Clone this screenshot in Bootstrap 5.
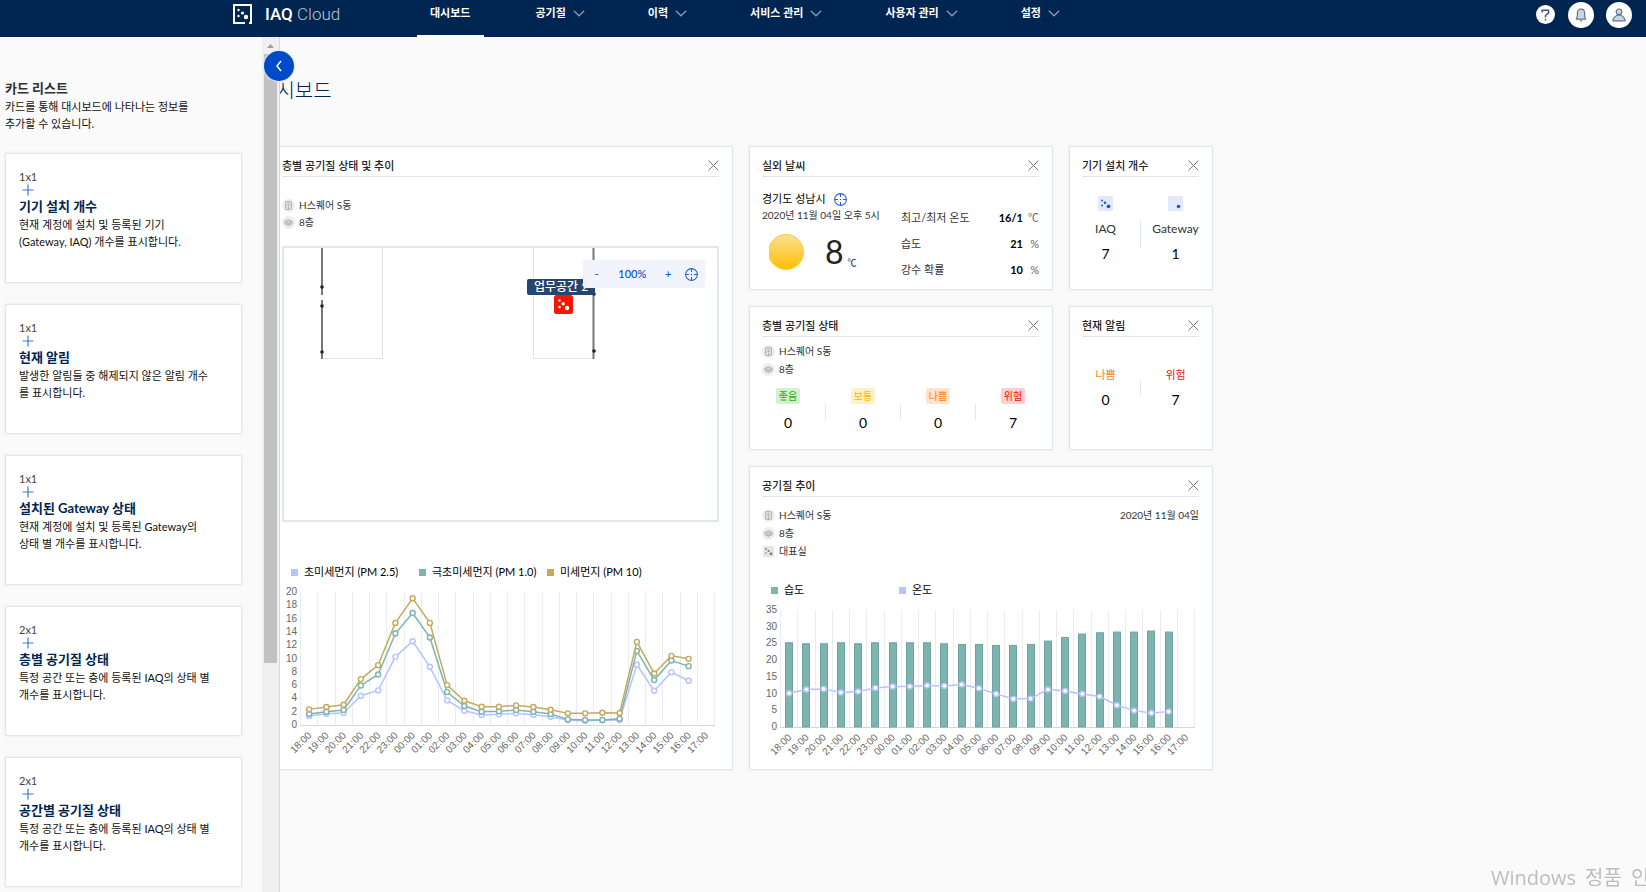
<!DOCTYPE html>
<html lang="ko">
<head>
<meta charset="utf-8">
<meta name="viewport" content="width=device-width, initial-scale=1">
<title>IAQ Cloud - 대시보드</title>
<link rel="stylesheet" href="https://cdn.jsdelivr.net/npm/bootstrap@5.3.0/dist/css/bootstrap.min.css">
<style>
  :root { --navy:#002550; --line:#e2e7ed; --blue:#0a50c8; --ink:#333; }
  body { background:#fafafa; color:#111; font-family:Lato,"Noto Sans CJK KR",sans-serif; font-size:11px; line-height:17px; min-height:100vh; }
  button { font:inherit; }
  .icon-btn { background:none; border:0; padding:0; line-height:0; }

  /* top bar */
  .topbar { background:var(--navy); height:37px; padding-right:14px; position:relative; z-index:3; }
  .brand { margin-left:233px; width:184px; gap:13px; height:27px; color:#fff; text-decoration:none; }
  .brand-name { font:500 17px/24px Roboto,sans-serif; }
  .brand-name span { font-weight:300; color:#b9c6d6; }
  .main-menu { gap:63px; padding-left:13px; }
  .main-menu a { color:#fff; font-weight:700; text-decoration:none; line-height:26px; gap:7px; position:relative; }
  .main-menu a.current { padding-right:2px; }
  .main-menu a.current::after { content:""; position:absolute; left:-13px; right:-12px; top:35px; height:4px; background:#fff; }
  .user-tools { gap:12px; height:29px; }
  .round-tool { background:#fff; border-radius:50%; width:26px; height:26px; display:flex; align-items:center; justify-content:center; }
  .round-tool.help { width:19px; height:19px; margin-right:1px; }

  /* card list panel */
  .panel { width:280px; height:calc(100vh - 37px); border-right:1px solid #d8d8d8; background:#fafafa; position:relative; z-index:2; }
  .panel-body { overflow:hidden; padding:42px 20px 0 5px; }
  .panel h2 { font-size:13px; line-height:18px; font-weight:700; color:var(--ink); margin:0 0 1px; }
  .panel-cards { gap:21px; margin-top:21px; }
  .tile { background:#fff; border:1px solid var(--line); box-shadow:0 0 3px #e6eaef; }
  .panel .tile { height:130px; padding:16px 13px 0; flex-shrink:0; }
  .tile-size { line-height:14px; color:#444; }
  .tile h3 { font-size:13px; line-height:18px; font-weight:700; color:var(--navy); margin:1px 0; }
  .add-btn { display:block; margin-left:3px; }
  .scroll-track { width:17px; background:#f0f0f0; flex-shrink:0; }
  .scroll-thumb { background:#c1c1c1; width:13px; height:609px; margin:6px 2px 0; }
  .scroll-track svg { display:block; margin:7px auto 0; }
  .collapse-btn { position:absolute; right:-15px; top:14px; width:30px; height:30px; border-radius:50%; background:#0049c8; border:0; padding:0; line-height:0; box-shadow:0 0 2px 1px #dfe6f3; }

  /* dashboard */
  .board { margin-left:-11px; padding-top:39px; flex:1 1 0; min-width:0; }
  .board h1 { font-size:20px; line-height:28px; font-weight:300; color:var(--navy); margin:0 0 42px -11px; }
  .units { display:grid; grid-template-columns:repeat(6,144px); grid-auto-rows:144px; gap:16px; }
  .units .tile { padding:0 13px 0 12px; }
  .w-large { grid-column:1 / span 3; grid-row:1 / span 4; }
  .w-two { grid-column:4 / span 2; }
  .w-wide { grid-column:4 / span 3; grid-row:3 / span 2; }
  .tile-head { height:30px; padding-top:7px; border-bottom:1px solid var(--line); }
  .tile-head h2 { font-size:11px; line-height:17px; font-weight:500; color:#222; margin:0; }
  .place { font-size:10px; line-height:18px; color:var(--ink); list-style:none; margin:0; padding:0; }
  .place li { display:flex; align-items:center; gap:4px; }
  .w-large .place { line-height:17px; margin:20px 0 15px; }
  .w-wide .place { margin-top:9px; }
  .w-two .place { margin-top:5px; }
  .place-date { font-size:10px; line-height:18px; margin-top:9px; color:var(--ink); }

  .floor { border:2px solid var(--line); height:276px; position:relative; overflow:hidden; }
  .floor-plan { position:absolute; left:0; top:0; }
  .room-name { position:absolute; left:243px; top:31px; height:16px; line-height:16px; padding:0 7px; background:#26466e; color:#fff; font-size:12px; font-weight:500; border-radius:2px; white-space:nowrap; width:68px; }
  .room-dot { position:absolute; left:270px; top:47px; }
  .zoomer { position:absolute; right:12px; top:12px; width:122px; height:28px; background:#f1f4fd; color:var(--blue); border-radius:2px; padding:0 7px 2px; }
  .zoomer button { color:var(--blue); width:13px; line-height:17px; }
  .zoomer .rate { width:54px; font-weight:500; }

  .legend-row { line-height:16px; padding-left:9px; margin-bottom:6px; color:#000; }
  .legend-row span { width:128px; white-space:nowrap; display:flex; align-items:center; gap:6px; flex-shrink:0; }
  .legend-row i { width:7px; height:7px; display:block; }
  .bg-lav { background:#b8c3fe; } .bg-teal { background:#7cb4b0; } .bg-gold { background:#c6a95f; }
  .w-large .legend-row { margin-top:42px; }
  .w-wide .legend-row { margin-top:22px; }
  .plot { display:block; width:100%; height:auto; }
  .plot text { font-family:"Liberation Sans",sans-serif; fill:#666; font-size:10px; }

  .weather-now { padding-top:14px; line-height:16px; width:139px; }
  .weather-now .when { font-size:10px; color:var(--ink); white-space:nowrap; }
  .weather-now .reading { padding:11px 0 0 7px; }
  .degrees { font-size:32px; line-height:36px; color:#222; }
  .degree-unit { font-size:9px; line-height:14px; }
  .weather-list { width:138px; margin-top:28px; }
  .weather-list td, .weather-list th { padding:0; line-height:26px; font-weight:400; color:var(--ink); }
  .weather-list td { text-align:right; }
  .weather-list td:nth-child(2) { font-weight:700; color:#000; }
  .weather-list td:last-child { width:16px; color:#666; }

  .tally { width:52px; text-align:center; display:flex; flex-direction:column; align-items:center; }
  .tally b { font-size:14px; line-height:20px; font-weight:400; color:#000; }
  .tally.narrow { width:47px; }
  .tally .kind { line-height:16px; margin-bottom:7px; }
  .tally .device { font-size:12px; margin-top:10px; color:var(--ink); }
  .rule { width:1px; background:var(--line); height:16px; }
  .devices .tally { padding-top:19px; }
  .devices .rule { height:29px; margin-top:43px; }
  .alerts .tally { padding-top:30px; }
  .alerts .rule { margin-top:43px; }
  .levels { margin-top:10px; }
  .level { width:24px; height:16px; font-size:10px; line-height:16px; border-radius:2px; margin-bottom:9px; white-space:nowrap; }
  .good { background:#d5f0cd; color:#2fae10; } .fair { background:#fff0c8; color:#ffb900; }
  .bad { background:#ffe3cb; color:#ff7a0a; } .danger { background:#ffcfcd; color:#ee1408; }
  .alerts .bad, .alerts .danger { background:none; }

  .os-note { position:fixed; right:0; bottom:0; width:155px; overflow:hidden; white-space:nowrap; gap:9px; color:#bdbdbd; font:400 20px/28px "Open Sans","Noto Sans CJK KR",sans-serif; pointer-events:none; }
</style>
</head>
<body class="overflow-hidden">

<svg class="d-none" aria-hidden="true">
  <symbol id="i-close" viewBox="0 0 11 11"><path d="M.5.5l10 10M10.5.5l-10 10" stroke="#777" fill="none"/></symbol>
  <symbol id="i-down" viewBox="0 0 12 7"><path d="M.8.8L6 5.8 11.2.8" stroke="#8c9db3" stroke-width="1.2" fill="none"/></symbol>
  <symbol id="i-plus" viewBox="0 0 12 12"><path d="M6 .5v11M.5 6h11" stroke="#3f78dc" stroke-width="1.2" fill="none"/></symbol>
  <symbol id="i-target" viewBox="0 0 13 13"><circle cx="6.500" cy="6.500" r="5.900" stroke="#2860cf" stroke-width="1.100" fill="none"/><path d="M6.500 .5v3.500M6.500 9v3.500M.5 6.500h3.500M9 6.500h3.500M6.500 5.800v1.400M5.800 6.500h1.400" stroke="#2860cf" fill="none"/></symbol>
  <symbol id="i-building" viewBox="0 0 13 13"><circle cx="6.500" cy="6.500" r="6.500" fill="#ededed"/><rect x="3.500" y="2.500" width="6" height="8" rx=".8" fill="#dedede" stroke="#b4b4b4"/><path d="M5.500 4.700h2M5.500 6.500h2M6.500 8v2" stroke="#aaa"/></symbol>
  <symbol id="i-floor" viewBox="0 0 13 13"><circle cx="6.500" cy="6.500" r="6.500" fill="#ededed"/><path d="M2.500 5.800l4-2 4 2-4 2zM2.500 7.500l4 2 4-2" fill="#d0d0d0" stroke="#b0b0b0"/></symbol>
  <symbol id="i-sensor" viewBox="0 0 13 13"><rect x="1" y="1" width="11" height="11" rx="1" fill="#e6e6e6"/><g fill="#777"><circle cx="4" cy="4" r=".9"/><circle cx="6.500" cy="6" r="1.100"/><circle cx="4" cy="8" r=".8"/><circle cx="9" cy="8.800" r="1.400"/></g></symbol>
</svg>

<header class="topbar d-flex align-items-start">
  <a href="#" class="brand d-flex align-items-center">
    <svg width="19" height="20" viewBox="0 0 19 20"><path d="M12 19H1V1h17v18h-2" fill="none" stroke="#fff" stroke-width="2"/><g fill="#fff"><circle cx="5.500" cy="6" r="1.200"/><circle cx="9.500" cy="9" r="1.600"/><circle cx="5.500" cy="12" r="1.200"/><circle cx="13" cy="13" r="2.200"/></g></svg>
    <span class="brand-name">IAQ <span>Cloud</span></span>
  </a>
  <nav class="main-menu d-flex flex-grow-1" aria-label="주 메뉴">
    <a href="#" class="current">대시보드</a>
    <a href="#" class="d-flex align-items-center">공기질<svg width="12" height="7"><use href="#i-down"/></svg></a>
    <a href="#" class="d-flex align-items-center">이력<svg width="12" height="7"><use href="#i-down"/></svg></a>
    <a href="#" class="d-flex align-items-center">서비스 관리<svg width="12" height="7"><use href="#i-down"/></svg></a>
    <a href="#" class="d-flex align-items-center">사용자 관리<svg width="12" height="7"><use href="#i-down"/></svg></a>
    <a href="#" class="d-flex align-items-center">설정<svg width="12" height="7"><use href="#i-down"/></svg></a>
  </nav>
  <div class="user-tools d-flex align-items-center">
    <button class="icon-btn round-tool help" aria-label="도움말"><svg width="9" height="12" viewBox="0 0 9 12"><path d="M1.200 3.500V1.200h6.300v3L4.500 6.500v2" fill="none" stroke="#3d567a" stroke-width="1.500"/><path d="M4.500 9.800v1.700" stroke="#3d567a" stroke-width="1.500"/></svg></button>
    <button class="icon-btn round-tool" aria-label="알림"><svg width="12" height="14" viewBox="0 0 12 14"><path d="M.8 11.200h10.400M1.800 11V9.500l.6-1V5C2.400 2.500 4 1.200 6 1.200S9.600 2.500 9.600 5v3.500l.6 1V11" fill="#ccd5e0" stroke="#5d7493" stroke-width="1.200"/><path d="M4.800 12.800h2.400" stroke="#5d7493" stroke-width="1.200"/></svg></button>
    <button class="icon-btn round-tool" aria-label="내 계정"><svg width="14" height="14" viewBox="0 0 14 14"><circle cx="7" cy="3.800" r="2.800" fill="#ccd5e0" stroke="#5d7493" stroke-width="1.200"/><path d="M1 12.800V11.500C2 9 4 7.800 5 7.200h4c1 .6 3 1.800 4 4.300v1.300z" fill="#ccd5e0" stroke="#5d7493" stroke-width="1.200"/></svg></button>
  </div>
</header>

<div class="d-flex">
  <aside class="panel d-flex">
    <div class="panel-body flex-grow-1">
      <h2>카드 리스트</h2>
      <div>카드를 통해 대시보드에 나타나는 정보를<br>추가할 수 있습니다.</div>
      <div class="panel-cards d-flex flex-column">
        <section class="tile"><div class="tile-size">1x1</div><button class="icon-btn add-btn" aria-label="추가"><svg width="12" height="12"><use href="#i-plus"/></svg></button><h3>기기 설치 개수</h3>현재 계정에 설치 및 등록된 기기<br>(Gateway, IAQ) 개수를 표시합니다.</section>
        <section class="tile"><div class="tile-size">1x1</div><button class="icon-btn add-btn" aria-label="추가"><svg width="12" height="12"><use href="#i-plus"/></svg></button><h3>현재 알림</h3>발생한 알림들 중 해제되지 않은 알림 개수<br>를 표시합니다.</section>
        <section class="tile"><div class="tile-size">1x1</div><button class="icon-btn add-btn" aria-label="추가"><svg width="12" height="12"><use href="#i-plus"/></svg></button><h3>설치된 Gateway 상태</h3>현재 계정에 설치 및 등록된 Gateway의<br>상태 별 개수를 표시합니다.</section>
        <section class="tile"><div class="tile-size">2x1</div><button class="icon-btn add-btn" aria-label="추가"><svg width="12" height="12"><use href="#i-plus"/></svg></button><h3>층별 공기질 상태</h3>특정 공간 또는 층에 등록된 IAQ의 상태 별<br>개수를 표시합니다.</section>
        <section class="tile"><div class="tile-size">2x1</div><button class="icon-btn add-btn" aria-label="추가"><svg width="12" height="12"><use href="#i-plus"/></svg></button><h3>공간별 공기질 상태</h3>특정 공간 또는 층에 등록된 IAQ의 상태 별<br>개수를 표시합니다.</section>
      </div>
    </div>
    <div class="scroll-track"><svg width="7" height="4" viewBox="0 0 7 4"><path d="M0 4L3.500 0 7 4z" fill="#a0a0a0"/></svg><div class="scroll-thumb"></div></div>
    <button class="collapse-btn" aria-label="접기"><svg width="8" height="14" viewBox="0 0 8 14"><path d="M6 2L2 7l4 5" fill="none" stroke="#fff" stroke-width="1.500"/></svg></button>
  </aside>

  <main class="board">
    <h1>대시보드</h1>
    <div class="units">

      <section class="tile w-large">
        <div class="tile-head d-flex justify-content-between align-items-center"><h2>층별 공기질 상태 및 추이</h2><button class="icon-btn" aria-label="닫기"><svg width="11" height="11"><use href="#i-close"/></svg></button></div>
        <ul class="place"><li><svg width="13" height="13"><use href="#i-building"/></svg>H스퀘어 S동</li><li><svg width="13" height="13"><use href="#i-floor"/></svg>8층</li></ul>
        <div class="floor">
          <svg class="floor-plan" width="433" height="272" viewBox="0 0 433 272">
            <path d="M38.500 110.500h60V0M249.500 0v110.500h60" fill="none" stroke="#e2e2e2"/>
            <path d="M38 0v47M38 52v59M309.500 0v111" stroke="#777" stroke-width="2"/>
            <g fill="#222"><circle cx="38" cy="39" r="1.800"/><circle cx="38" cy="58" r="1.800"/><circle cx="38" cy="104" r="1.800"/><circle cx="310" cy="46" r="1.800"/><circle cx="310" cy="103" r="1.800"/></g>
          </svg>
          <div class="room-name">업무공간 2</div>
          <svg class="room-dot" width="19" height="19" viewBox="0 0 19 19"><rect width="19" height="19" rx="2.500" fill="#f81500"/><g fill="#fff"><circle cx="5.500" cy="5.500" r="1.300"/><circle cx="9.200" cy="8.800" r="1.700"/><circle cx="5.500" cy="12" r="1.300"/><circle cx="13" cy="13" r="2.200"/></g></svg>
          <div class="zoomer d-flex align-items-center justify-content-between">
            <button class="icon-btn" aria-label="축소">-</button><span class="rate text-center">100%</span><button class="icon-btn" aria-label="확대">+</button><button class="icon-btn ms-2" aria-label="가운데 맞춤"><svg width="13" height="13"><use href="#i-target"/></svg></button>
          </div>
        </div>
        <div class="legend-row d-flex"><span><i class="bg-lav"></i>초미세먼지 (PM 2.5)</span><span><i class="bg-teal"></i>극초미세먼지 (PM 1.0)</span><span><i class="bg-gold"></i>미세먼지 (PM 10)</span></div>
        <svg class="plot" id="dust" viewBox="0 0 437 170"></svg>
      </section>

      <section class="tile w-two">
        <div class="tile-head d-flex justify-content-between align-items-center"><h2>실외 날씨</h2><button class="icon-btn" aria-label="닫기"><svg width="11" height="11"><use href="#i-close"/></svg></button></div>
        <div class="d-flex align-items-start">
          <div class="weather-now">
            <div class="d-flex align-items-center gap-2 text-black">경기도 성남시<svg width="13" height="13"><use href="#i-target"/></svg></div>
            <div class="when">2020년 11월 04일 오후 5시</div>
            <div class="reading d-flex align-items-end">
              <svg width="36" height="36" viewBox="0 0 36 36"><defs><linearGradient id="sun" x2="0" y2="1"><stop stop-color="#fbe093"/><stop offset="1" stop-color="#ffc000"/></linearGradient></defs><circle cx="17" cy="18" r="17.500" fill="url(#sun)" stroke="#fccb3b"/></svg>
              <span class="degrees ms-3 ps-1">8</span><span class="degree-unit ms-1">℃</span>
            </div>
          </div>
          <table class="weather-list">
            <tr><th scope="row">최고/최저 온도</th><td>16/1</td><td>℃</td></tr>
            <tr><th scope="row">습도</th><td>21</td><td>%</td></tr>
            <tr><th scope="row">강수 확률</th><td>10</td><td>%</td></tr>
          </table>
        </div>
      </section>

      <section class="tile">
        <div class="tile-head d-flex justify-content-between align-items-center"><h2>기기 설치 개수</h2><button class="icon-btn" aria-label="닫기"><svg width="11" height="11"><use href="#i-close"/></svg></button></div>
        <div class="devices d-flex justify-content-between">
          <div class="tally narrow"><svg width="15" height="15" viewBox="0 0 15 15"><rect width="15" height="15" rx="1" fill="#e2e9fa"/><g fill="#1f5ad0"><circle cx="4" cy="4.500" r="1"/><circle cx="7" cy="6.800" r="1.300"/><circle cx="4" cy="9.500" r="1"/><circle cx="10.500" cy="10.300" r="1.900"/></g></svg><span class="kind device">IAQ</span><b>7</b></div>
          <div class="rule"></div>
          <div class="tally narrow"><svg width="15" height="15" viewBox="0 0 15 15"><rect width="15" height="15" rx="1" fill="#e2e9fa"/><circle cx="10.500" cy="10.500" r="1.800" fill="#1f5ad0"/></svg><span class="kind device">Gateway</span><b>1</b></div>
        </div>
      </section>

      <section class="tile w-two">
        <div class="tile-head d-flex justify-content-between align-items-center"><h2>층별 공기질 상태</h2><button class="icon-btn" aria-label="닫기"><svg width="11" height="11"><use href="#i-close"/></svg></button></div>
        <ul class="place"><li><svg width="13" height="13"><use href="#i-building"/></svg>H스퀘어 S동</li><li><svg width="13" height="13"><use href="#i-floor"/></svg>8층</li></ul>
        <div class="levels d-flex justify-content-between">
          <div class="tally"><span class="level good">좋음</span><b>0</b></div><div class="rule mt-3"></div>
          <div class="tally"><span class="level fair">보통</span><b>0</b></div><div class="rule mt-3"></div>
          <div class="tally"><span class="level bad">나쁨</span><b>0</b></div><div class="rule mt-3"></div>
          <div class="tally"><span class="level danger">위험</span><b>7</b></div>
        </div>
      </section>

      <section class="tile alerts">
        <div class="tile-head d-flex justify-content-between align-items-center"><h2>현재 알림</h2><button class="icon-btn" aria-label="닫기"><svg width="11" height="11"><use href="#i-close"/></svg></button></div>
        <div class="d-flex justify-content-between">
          <div class="tally narrow"><span class="kind bad">나쁨</span><b>0</b></div>
          <div class="rule"></div>
          <div class="tally narrow"><span class="kind danger">위험</span><b>7</b></div>
        </div>
      </section>

      <section class="tile w-wide">
        <div class="tile-head d-flex justify-content-between align-items-center"><h2>공기질 추이</h2><button class="icon-btn" aria-label="닫기"><svg width="11" height="11"><use href="#i-close"/></svg></button></div>
        <div class="d-flex justify-content-between align-items-start">
          <ul class="place"><li><svg width="13" height="13"><use href="#i-building"/></svg>H스퀘어 S동</li><li><svg width="13" height="13"><use href="#i-floor"/></svg>8층</li><li><svg width="13" height="13"><use href="#i-sensor"/></svg>대표실</li></ul>
          <div class="place-date">2020년 11월 04일</div>
        </div>
        <div class="legend-row d-flex"><span><i class="bg-teal"></i>습도</span><span><i class="bg-lav"></i>온도</span></div>
        <svg class="plot" id="climate" viewBox="0 0 437 155"></svg>
      </section>
    </div>
  </main>
</div>

<div class="os-note d-flex"><span>Windows</span><span>정품</span><span>인</span></div>

<script src="https://cdn.jsdelivr.net/npm/bootstrap@5.3.0/dist/js/bootstrap.bundle.min.js"></script>
<script>
  const LEFT = 18.5, STEP = 17.25, TOP = 6;
  // Draws the hourly grid, optional bars and any number of lines into one svg
  function draw(id, bottom, max, tick, bars, lines) {
    const x = i => LEFT + STEP * (i + 0.5), y = v => bottom - v / max * (bottom - TOP);
    let s = '';
    for (let i = 0; i <= 24; i++) { const g = Math.floor(LEFT + STEP * i) + 0.5; s += `<path d="M${g} ${TOP}V${bottom}" stroke="#e9ecf0"/>`; }
    s += `<path d="M18 ${bottom + 0.5}H433" stroke="#d4d8dc"/>`;
    for (let v = 0; v <= max; v += tick) s += `<text x="15" y="${y(v) + 3}" text-anchor="end">${v}</text>`;
    for (let i = 0; i < 24; i++) s += `<text text-anchor="end" transform="translate(${x(i) + 3} ${bottom + 11}) rotate(-45)">${String((18 + i) % 24).padStart(2, '0')}:00</text>`;
    bars.forEach((v, i) => { const l = Math.round(x(i) - 4); s += `<rect x="${l}.5" y="${y(v)}" width="7" height="${bottom - y(v)}" fill="#7cb4b0" stroke="#6fa39f"/>`; });
    lines.forEach(([color, data]) => {
      s += `<polyline fill="none" stroke="${color}" stroke-width="1.5" points="${data.map((v, i) => x(i) + ',' + y(v)).join(' ')}"/>`;
      data.forEach((v, i) => s += `<circle cx="${x(i)}" cy="${y(v)}" r="2.5" fill="#fff" stroke="${color}" stroke-width="1.4"/>`);
    });
    document.getElementById(id).innerHTML = s;
  }
  draw('dust', 139, 20, 2, [], [
    ['#b8c3fe', [1.35,1.7,1.8,4.4,5.2,10.25,12.6,8.75,3.7,2.15,1.5,1.6,1.75,1.55,1.25,.7,.65,.7,.75,9.05,5.15,7.95,6.65]],
    ['#7cb4b0', [1.65,2,2.25,5.95,7.6,13.75,16.85,13.15,4.95,2.85,2,2.05,2.25,2,1.65,.85,.75,.75,.95,11.15,6.75,9.7,8.85]],
    ['#c6a95f', [2.35,2.7,3.05,6.9,9,15.35,19.05,15.35,6,3.65,2.75,2.75,2.95,2.7,2.3,1.75,1.75,1.85,1.8,12.5,7.75,10.4,9.95]]
  ]);
  draw('climate', 123, 35, 5,
    [25.2,24.9,24.9,25.2,24.9,25.2,25.2,25.2,25.2,24.9,24.7,24.7,24.4,24.4,24.7,25.7,26.8,27.8,28.2,28.4,28.4,28.7,28.4],
    [['#b8c3fe', [10.1,11.2,11.4,10.3,10.6,11.7,12.1,12.1,12.4,12.3,12.7,11.6,9.9,8.4,8.5,11.2,10.8,9.9,9.1,6.5,4.9,4.2,4.6]]]);
</script>
</body>
</html>
